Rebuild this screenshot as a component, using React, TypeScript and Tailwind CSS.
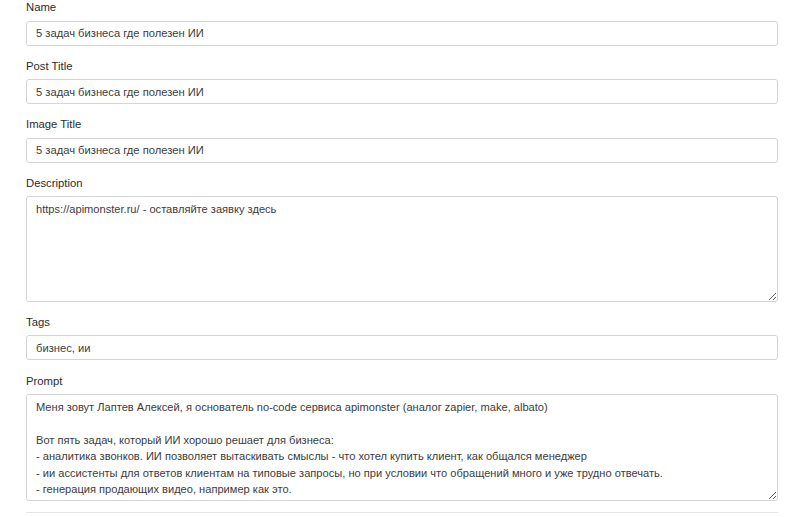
const promptText = `Меня зовут Лаптев Алексей, я основатель no-code сервиса apimonster (аналог zapier, make, albato)

Вот пять задач, который ИИ хорошо решает для бизнеса:
- аналитика звонков. ИИ позволяет вытаскивать смыслы - что хотел купить клиент, как общался менеджер
- ии ассистенты для ответов клиентам на типовые запросы, но при условии что обращений много и уже трудно отвечать.
- генерация продающих видео, например как это.
- генерация статей для блога и контента для SEO
- обработка входящих заявок`;

const inputCls =
  "w-full h-[25px] px-[9px] border border-[#d4d4d4] rounded-[3px] bg-white text-[11.2px] text-[#3c3c3c] outline-none";
const areaCls =
  "w-full px-[9px] pt-[4px] pb-[5px] border border-[#d4d4d4] rounded-[3px] bg-white text-[11.1px] leading-[16.5px] text-[#3c3c3c] outline-none overflow-hidden";

const Label = ({ children }: { children: string }) => (
  <label className="block text-[11.3px] leading-[14px] text-[#2b2b2b] mb-[6px]">
    {children}
  </label>
);

export default function App() {
  return (
    <div className="bg-white w-[800px] h-[517px] overflow-hidden font-['Liberation_Sans',Arial,sans-serif]">
      <div className="pl-[26px] pr-[22px]">
        <div className="mb-[13px]">
          <Label>Name</Label>
          <input className={inputCls} defaultValue="5 задач бизнеса где полезен ИИ" />
        </div>
        <div className="mb-[13px]">
          <Label>Post Title</Label>
          <input className={inputCls} defaultValue="5 задач бизнеса где полезен ИИ" />
        </div>
        <div className="mb-[13px]">
          <Label>Image Title</Label>
          <input className={inputCls} defaultValue="5 задач бизнеса где полезен ИИ" />
        </div>
        <div className="mb-[13px]">
          <Label>Description</Label>
          <textarea
            className={`${areaCls} h-[106px] block`}
            defaultValue="https://apimonster.ru/ - оставляйте заявку здесь"
          />
        </div>
        <div className="mb-[13.5px]">
          <Label>Tags</Label>
          <input className={inputCls} defaultValue="бизнес, ии" />
        </div>
        <div className="mb-[11px]">
          <Label>Prompt</Label>
          <textarea className={`${areaCls} h-[107px] block`} defaultValue={promptText} />
        </div>
        <div className="h-[20px] border-t border-[#e4e4e4]" />
      </div>
    </div>
  );
}
